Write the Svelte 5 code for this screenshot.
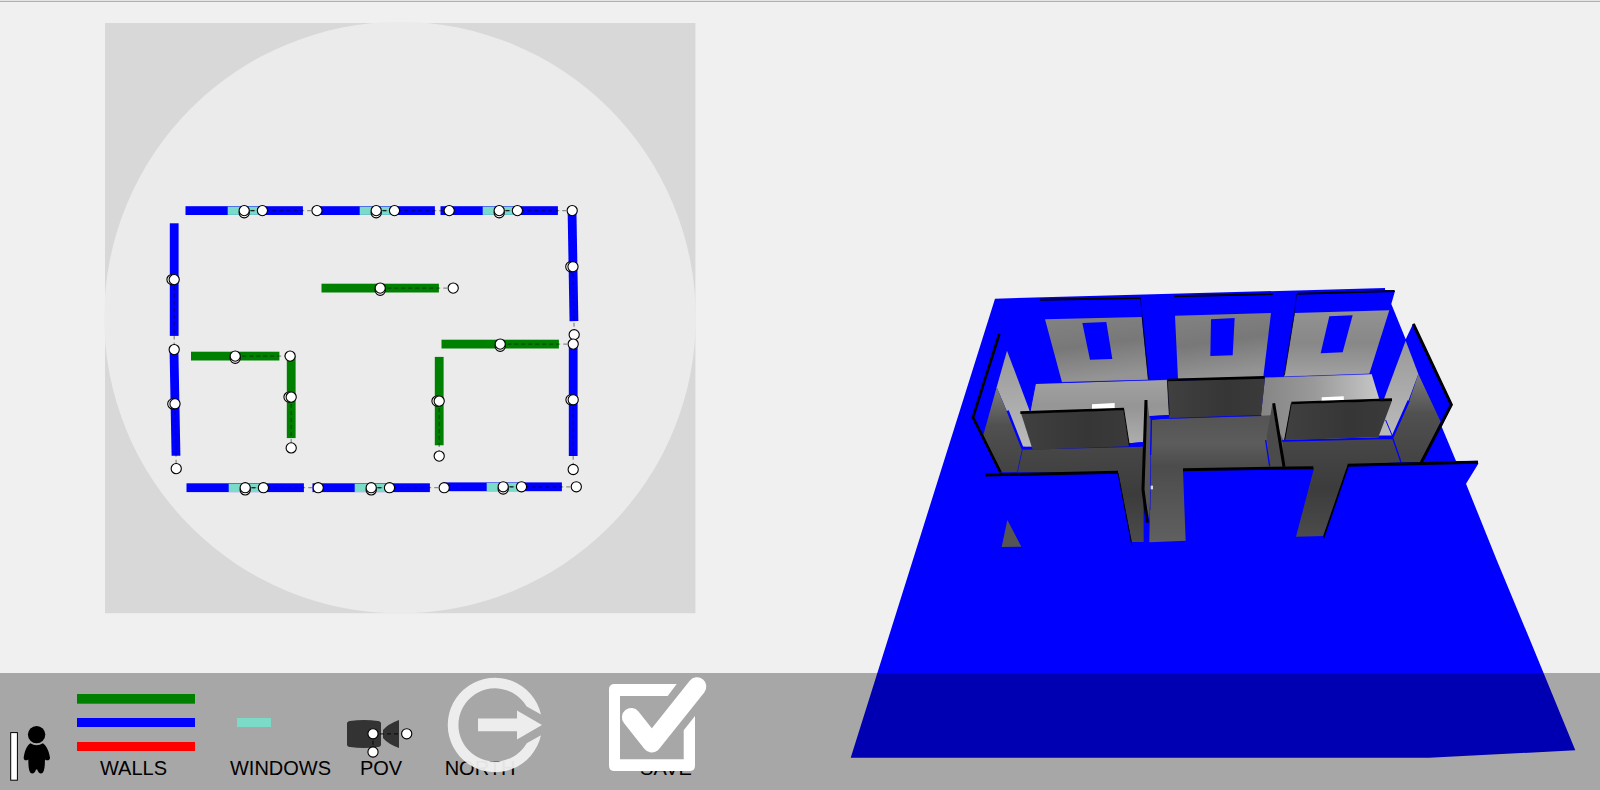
<script>
  // angle is measured from the wall's centre towards its rotation handle
  const walls = [
    { x: 244.2, y: 210.6, len: 117.4, reach: 72.8, angle: 0, color: 'blue', win: 18.2 },
    { x: 376.2, y: 210.6, len: 117.4, reach: 73, angle: 0, color: 'blue', win: 18.3 },
    { x: 499.2, y: 210.6, len: 117.4, reach: 73, angle: 0, color: 'blue', win: 18.2 },
    { x: 174.2, y: 279.6, len: 112.6, reach: 70, angle: 90, color: 'blue' },
    { x: 175, y: 403.8, len: 104, reach: 64.8, angle: 88.9, color: 'blue' },
    { x: 573, y: 266.7, len: 109, reach: 68, angle: 89, color: 'blue' },
    { x: 573.2, y: 399.8, len: 112.4, reach: 69.7, angle: 90, color: 'blue' },
    { x: 235.2, y: 356.1, len: 88.4, reach: 54.9, angle: 0, color: 'green' },
    { x: 291.2, y: 397.1, len: 82, reach: 50.8, angle: 90, color: 'green' },
    { x: 380.2, y: 288.1, len: 117.4, reach: 73, angle: 0, color: 'green' },
    { x: 500.2, y: 344.1, len: 117.4, reach: 73, angle: 0, color: 'green' },
    { x: 439.2, y: 401.1, len: 88.4, reach: 55, angle: 90, color: 'green' },
    { x: 245.2, y: 487.7, len: 117.4, reach: 73, angle: 0, color: 'blue', win: 18.2 },
    { x: 371.2, y: 487.7, len: 117.4, reach: 73, angle: 0, color: 'blue', win: 18.3 },
    { x: 503.2, y: 486.8, len: 117.4, reach: 73.1, angle: 0, color: 'blue', win: 18.3 }
  ];
</script>

<main>
  <svg class="plan" viewBox="0 0 800 790">
    <rect x="105" y="23" width="590.4" height="590.2" fill="#d8d8d8" />
    <circle cx="400" cy="317.7" r="295.8" fill="#ebebeb" />
    {#each walls as w}
      <g transform="translate({w.x} {w.y}) rotate({w.angle})">
        <rect x={-w.len / 2} y="-4.4" width={w.len} height="8.8" fill={w.color} />
        {#if w.win}<rect x="-16.5" y="-4" width="34" height="8.3" fill="#7bdac8" />{/if}
      </g>
    {/each}
    {#each walls as w}
      <g transform="translate({w.x} {w.y}) rotate({w.angle})">
        <line class="dash" x2={w.reach} />
        <circle class="handle" cy="2.2" r="5.1" />
        <circle class="handle" r="5.1" />
        <circle class="handle" cx={w.reach} r="5.1" />
        {#if w.win}
          <line class="dash strong" x1="6" x2="13" />
          <circle class="handle" cx={w.win} r="5.1" />
        {/if}
      </g>
    {/each}
  </svg>

  <svg class="scene" viewBox="800 0 800 790">
    <defs>
      <linearGradient id="back" x1="0" y1="0" x2=".2" y2="1">
        <stop offset="0" stop-color="#838383" /><stop offset=".5" stop-color="#787878" /><stop offset="1" stop-color="#949494" />
      </linearGradient>
      <linearGradient id="back3" x1="0" y1="0" x2="0" y2="1">
        <stop offset="0" stop-color="#929292" /><stop offset=".5" stop-color="#888" /><stop offset="1" stop-color="#a2a2a2" />
      </linearGradient>
      <linearGradient id="floor" x1="0" y1="0" x2="0" y2="1">
        <stop offset="0" stop-color="#a2a2a2" /><stop offset=".4" stop-color="#959595" /><stop offset="1" stop-color="#b0b0b0" />
      </linearGradient>
      <linearGradient id="floorR" x1="0" y1="0" x2="1" y2="0">
        <stop offset="0" stop-color="#858585" /><stop offset=".4" stop-color="#999" /><stop offset="1" stop-color="#d0d0d0" />
      </linearGradient>
      <linearGradient id="sideL" x1="0" y1="0" x2="0" y2="1">
        <stop offset="0" stop-color="#999" /><stop offset="1" stop-color="#bbb" />
      </linearGradient>
      <linearGradient id="dark" x1="0" y1="0" x2="1" y2="0">
        <stop offset="0" stop-color="#404040" /><stop offset=".6" stop-color="#363636" /><stop offset="1" stop-color="#3a3a3a" />
      </linearGradient>
      <linearGradient id="hall" x1="0" y1="0" x2="0" y2="1">
        <stop offset="0" stop-color="#545454" /><stop offset=".22" stop-color="#5c5c5c" /><stop offset=".4" stop-color="#4c4c4c" /><stop offset="1" stop-color="#606060" />
      </linearGradient>
      <linearGradient id="low" x1="0" y1="0" x2="0" y2="1">
        <stop offset="0" stop-color="#474747" /><stop offset=".5" stop-color="#3c3c3c" /><stop offset="1" stop-color="#4b4b4b" />
      </linearGradient>
      <linearGradient id="sideD" x1="0" y1="0" x2="0" y2="1">
        <stop offset="0" stop-color="#7c7c7c" /><stop offset=".45" stop-color="#505050" /><stop offset="1" stop-color="#434343" />
      </linearGradient>
    </defs>

    <path fill="#00f" d="M995 298.7 1385 288V290L1395 291 1391.3 304 1405.7 339.3 1413.3 323.3 1452.3 404.7 1441.7 426.7 1456 461 1477.7 460.7 1478.3 463.7 1466 483.7 1496.7 560 1530 640 1575.3 750.3 1429 757.7H850.7Z" />

    <g transform="translate(960 280) scale(.33333)">
      <!-- back walls with window openings -->
      <path fill="url(#back)" d="M255 118 545 111 565 299 306 307Z" />
      <path fill="#00f" d="M367 129 439 126 457 237 390 239Z" />
      <path fill="url(#back)" d="M645 107 933 99 910 290 654 297Z" />
      <path fill="#00f" d="M753 118 824 114 818 226 751 228Z" />
      <path fill="url(#back3)" d="M1004 99 1288 91 1228 281 972 290Z" />
      <path fill="#00f" d="M1108 109 1178 106 1148 217 1082 220Z" />
      <g class="edge">
        <path stroke-width="6" d="M240 59 541 54M643 49 938 42M1012 41 1304 33" />
        <path stroke-width="1.5" d="M541 52 547 112M1010 42 1003 100" />
        <path stroke-width="2.5" d="M547 112 565 298M1003 100 973 286" />
      </g>

      <!-- far rooms -->
      <path fill="url(#floor)" d="M226 312 622 299 628 405 568 409 550 486 508 490 195 500 210 395Z" />
      <path fill="#fff" d="M396 373 464 369V387L396 389Z" />
      <path fill="url(#sideL)" d="M141 212 210 395 216 500 187 500 143 400 110 322Z" />
      <path fill="url(#sideD)" d="M110 322 143 400 187 505 172 577H120L70 465Z" />
      <path fill="url(#floorR)" d="M915 292 1235 282 1257 355 1297 470 965 480 903 405Z" />
      <path fill="#fff" d="M1085 352 1151 349 1152 362 1085 365Z" />
      <path fill="url(#sideL)" d="M1337 182 1375 282 1345 362 1298 470 1258 466 1272 357Z" />
      <path fill="url(#sideD)" d="M1375 282 1442 425 1383 547H1323L1298 475 1347 365Z" />
      <g stroke="#00f" fill="none">
        <path stroke-width="7" d="M143 392 187 504H218M1346 362 1298 470H1255" />
        <path stroke-width="3" d="M1277 420 1298 470M226 312 210 395" />
        <path stroke-width="1.2" d="M306 307 622 299M915 292 1235 282" />
      </g>

      <!-- near rooms -->
      <path fill="url(#low)" d="M187 509 550 500 551 786H515L474 579 172 577Z" />
      <path fill="#00f" d="M508 490 550 486V497L508 500Z" />
      <path fill="url(#hall)" d="M575 418 905 407 932 406 970 480 975 565 669 573 677 782 568 787Z" />
      <path fill="#00f" d="M568 408 628 405V415L575 420Z" />
      <path fill="url(#low)" d="M968 483 1298 475 1323 547 1165 555 1090 768 1008 770 1062 565 970 562Z" />
      <path fill="url(#dark)" d="M622 303 915 295 903 405 628 415Z" />
      <path fill="url(#dark)" d="M183 400 491 390 508 499 218 509Z" />
      <path fill="url(#dark)" d="M994 372 1296 362 1255 472 973 481Z" />
      <path fill="#555" d="M562 362 568 410 574 420 571 640 568 720 549 628Z" />
      <path fill="#4b4b4b" d="M937 372 920 470 930 558H970Z" />
      <g stroke="#00f" fill="none">
        <path stroke-width="4" d="M574 416 572 525M965 483 1298 475M917 480 929 559M1298 474 1323 547" />
        <path stroke-width="1.5" d="M572 525 571 690M187 509 172 577M628 415 904 407" />
      </g>
      <rect x="572" y="617" width="7" height="11" fill="#ddd" />
      <path fill="#555" d="M142 720 125 801 184 800Z" />

      <g class="edge">
        <path stroke-width="8" d="M118 162 39 412 122 578M181 398 492 387M622 300 914 292M994 369 1296 359" />
        <path stroke-width="9" d="M558 360 549 628 562 728M941 370 972 560M1360 132 1474 374 1384 547" />
        <path stroke-width="9" d="M76 585 474 577M669 569 1060 563M1163 556 1554 547" />
        <path stroke-width="3" d="M491 387 508 497M994 370 974 480M474 579 516 797" />
        <path stroke-width="5" d="M1165 556 1090 775" />
        <path stroke-width="2" d="M622 302 628 405" />
      </g>
    </g>
  </svg>

  <footer>
    <div class="tool person">
      <svg viewBox="0 673 60 117">
        <rect x="10.7" y="732.6" width="6.7" height="47.6" fill="#fff" stroke="#000" />
        <circle cx="36.6" cy="734.6" r="8.7" />
        <path d="M30.3 743.3Q36.6 747 42.9 743.3C47 746 49.5 753 50 758C49.8 760.5 47 761 45 759.5C44.8 764 45 769 43 772.5C41 774.5 38.5 773.5 37.2 769.5H36C34.9 773.5 32 774.5 30.2 772.5C28.2 769 28.5 764 28.3 759.5C26 761 23.8 760.5 23.7 758C24.2 753 26.3 746 30.3 743.3Z" />
      </svg>
    </div>
    <div class="tool walls">
      <span>WALLS</span>
      <svg viewBox="60 673 146 117">
        <rect x="77" y="694" width="118" height="9.7" fill="green" />
        <rect x="77" y="718" width="118" height="9" fill="blue" />
        <rect x="77" y="742" width="118" height="9" fill="red" />
      </svg>
    </div>
    <div class="tool windows">
      <span>WINDOWS</span>
      <svg viewBox="206 673 149 117"><rect x="237" y="718" width="34" height="9" fill="#7bdac8" /></svg>
    </div>
    <div class="tool pov">
      <span>POV</span>
      <svg viewBox="355 673 52 117">
        <path fill="#333" d="M347 723.5Q347 721.5 350 721Q364 719 378 721Q381 721.5 381 723.5V744.5Q381 746.5 378 747Q364 749 350 747Q347 746.5 347 744.5ZM383 730Q388 724 399 720V748Q388 744 383 738Z" />
        <path class="dash strong" d="M373 733.8H406.7M373 733.8V752" />
        <circle class="handle" cx="373" cy="733.8" r="5.1" />
        <circle class="handle" cx="406.7" cy="733.8" r="5.1" />
        <circle class="handle" cx="373" cy="752" r="5.1" />
      </svg>
    </div>
    <div class="tool north">
      <span>NORTH</span>
      <svg viewBox="407 673 146 117">
        <path fill="#f0f0f0" opacity=".95" d="M541 714.6A47.2 47.2 0 1 0 541 735.3L526.7 743.3A36.6 36.6 0 1 1 526.7 706.6ZM478 718.4H517V710.5L542 724.9 517 739.5V731.2H478Z" />
      </svg>
    </div>
    <div class="tool save">
      <span>SAVE</span>
      <svg viewBox="553 673 226 117">
        <path fill="#fff" d="M676.7 684H614.5Q609 684 609 689.5V765.5Q609 771 614.5 771H689.5Q695 771 695 765.5V716L683.7 730.3V759.3H620V696H667.7Z" />
        <path fill="none" stroke="#fff" stroke-width="18.6" stroke-linecap="round" stroke-linejoin="round" d="M631.2 717.2 651.8 743.2 697 686.6" />
      </svg>
    </div>
  </footer>
</main>

<style>
  :global(body) {
    margin: 0;
    overflow: hidden;
  }
  main {
    position: relative;
    box-sizing: border-box;
    width: 1600px;
    height: 790px;
    display: grid;
    grid-template-columns: 800px 800px;
    background: linear-gradient(#e4e4e4 1px, #b0b0b0 1px, #b0b0b0 2px, #f0f0f0 2px);
    font-family: "Liberation Sans", Arial, sans-serif;
  }
  svg {
    display: block;
    overflow: visible;
  }
  .plan,
  .scene {
    width: 800px;
    height: 790px;
  }
  .handle {
    fill: #fff;
    stroke: #000;
    stroke-width: 1.1;
  }
  .dash {
    fill: none;
    stroke: #000;
    stroke-opacity: 0.4;
    stroke-width: 1.3;
    stroke-dasharray: 4 3;
  }
  .strong {
    stroke-opacity: 0.7;
  }
  .edge {
    fill: none;
    stroke: #000;
  }
  footer {
    position: absolute;
    left: 0;
    right: 0;
    bottom: 0;
    height: 117px;
    display: flex;
    background: rgba(0, 0, 0, 0.3);
  }
  .tool {
    display: grid;
    grid-template: 117px / 100%;
  }
  .tool > * {
    grid-area: 1 / 1;
  }
  .tool svg {
    width: 100%;
    height: 117px;
  }
  .tool span {
    align-self: end;
    justify-self: center;
    margin-bottom: 11px;
    font-size: 20px;
    line-height: 22px;
    color: #000;
  }
  .walls span {
    padding-left: 1px;
  }
  .person { width: 60px; }
  .walls { width: 146px; }
  .windows { width: 149px; }
  .pov { width: 52px; }
  .north { width: 146px; }
  .save { width: 226px; }
</style>
